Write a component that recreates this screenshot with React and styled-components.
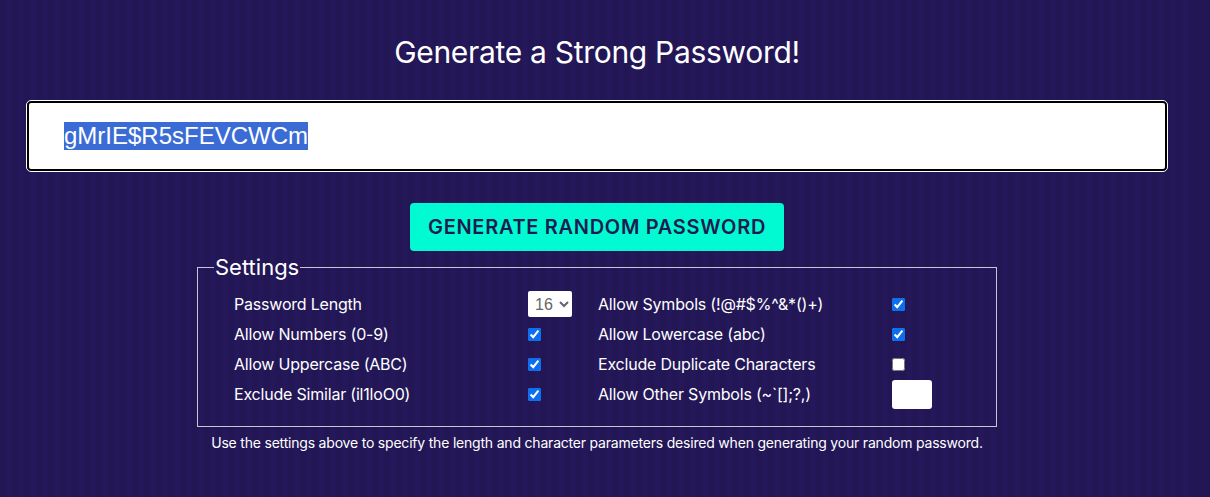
import React, { useEffect, useRef } from 'react';
import styled, { createGlobalStyle } from 'styled-components';

const GlobalStyle = createGlobalStyle`
  html, body {
    margin: 0;
    padding: 0;
    background: #221655;
  }
  body {
    font-family: Inter, "Noto Sans", sans-serif;
    color: #ffffff;
  }
`;

const Page = styled.div`
  width: 1194px;
  min-height: 497px;
  display: flex;
  flex-direction: column;
  align-items: center;
  background: repeating-linear-gradient(
    90deg,
    #221655 0px,
    #221655 6px,
    #24185a 6px,
    #24185a 12px
  );
`;

const Title = styled.h1`
  margin: 32px 0 0;
  font-size: 30px;
  font-weight: 400;
  line-height: 40px;
  letter-spacing: -0.3px;
`;

const PasswordField = styled.input`
  box-sizing: border-box;
  margin-top: 29px;
  width: 1140px;
  height: 70px;
  padding: 0 0 0 35px;
  border: 2px solid #000;
  border-radius: 4px;
  outline: 1px solid #fff;
  outline-offset: 0;
  background: #fff;
  font-family: "Liberation Sans", Arial, sans-serif;
  font-size: 24px;
  color: #000;

  &::selection {
    background: #3b6cd6;
    color: #fff;
  }
`;

const GenerateButton = styled.button`
  margin-top: 32px;
  height: 48px;
  padding: 0 18px;
  border: none;
  border-radius: 4px;
  background: #02fad2;
  color: #1d1b4f;
  font-family: Inter, sans-serif;
  font-size: 20px;
  font-weight: 600;
  letter-spacing: 0.7px;
  cursor: pointer;
`;

const Settings = styled.fieldset`
  box-sizing: border-box;
  width: 800px;
  margin: 4px 0 0;
  padding: 10px 0 17px 16px;
  border: 1px solid #c8c4d6;
`;

const Legend = styled.legend`
  padding: 0 1px;
  margin-left: 0;
  font-size: 22px;
  line-height: 24px;
`;

const Grid = styled.div`
  display: grid;
  grid-template-columns: 294px 70px 294px 70px;
  grid-auto-rows: 30px;
  align-items: center;
  padding-left: 20px;
`;

const Label = styled.label`
  font-size: 16px;
  letter-spacing: -0.2px;
`;

const Control = styled.div`
  display: flex;
  align-items: center;
`;

const Check = styled.input.attrs({ type: 'checkbox' })`
  width: 13px;
  height: 13px;
  margin: 0;
  accent-color: #0b6ff0;
`;

const LengthSelect = styled.select`
  width: 44px;
  height: 26px;
  font-family: "Liberation Sans", Arial, sans-serif;
  font-size: 16px;
  color: #666;
  border: none;
  border-radius: 2px;
  background: #fff;
  padding: 0 0 0 3px;
`;

const SymbolsInput = styled.input`
  box-sizing: border-box;
  width: 40px;
  height: 29px;
  border: none;
  border-radius: 3px;
  background: #fff;
`;

const Note = styled.p`
  margin: 7px 0 0;
  font-size: 14px;
  letter-spacing: -0.2px;
`;

const rightOptions = [
  { label: 'Allow Symbols (!@#$%^&*()+)', checked: true },
  { label: 'Allow Lowercase (abc)', checked: true },
  { label: 'Exclude Duplicate Characters', checked: false }
];

const leftOptions = [
  { label: 'Allow Numbers (0-9)', checked: true },
  { label: 'Allow Uppercase (ABC)', checked: true },
  { label: 'Exclude Similar (il1loO0)', checked: true }
];

export default function App() {
  const fieldRef = useRef(null);

  useEffect(() => {
    if (fieldRef.current) {
      fieldRef.current.focus();
      fieldRef.current.select();
    }
  }, []);

  return (
    <Page>
      <GlobalStyle />
      <Title>Generate a Strong Password!</Title>
      <PasswordField ref={fieldRef} defaultValue="gMrIE$R5sFEVCWCm" readOnly />
      <GenerateButton>GENERATE RANDOM PASSWORD</GenerateButton>
      <Settings>
        <Legend>Settings</Legend>
        <Grid>
          <Label>Password Length</Label>
          <Control>
            <LengthSelect defaultValue="16">
              {Array.from({ length: 25 }, (_, i) => i + 8).map((n) => (
                <option key={n} value={n}>{n}</option>
              ))}
            </LengthSelect>
          </Control>
          <Label>{rightOptions[0].label}</Label>
          <Control><Check defaultChecked={rightOptions[0].checked} /></Control>

          {leftOptions.map((left, i) => (
            <React.Fragment key={left.label}>
              <Label>{left.label}</Label>
              <Control><Check defaultChecked={left.checked} /></Control>
              {i < 2 ? (
                <>
                  <Label>{rightOptions[i + 1].label}</Label>
                  <Control><Check defaultChecked={rightOptions[i + 1].checked} /></Control>
                </>
              ) : (
                <>
                  <Label>Allow Other Symbols (~`[];?,)</Label>
                  <Control><SymbolsInput type="text" /></Control>
                </>
              )}
            </React.Fragment>
          ))}
        </Grid>
      </Settings>
      <Note>
        Use the settings above to specify the length and character parameters desired when generating your random password.
      </Note>
    </Page>
  );
}
